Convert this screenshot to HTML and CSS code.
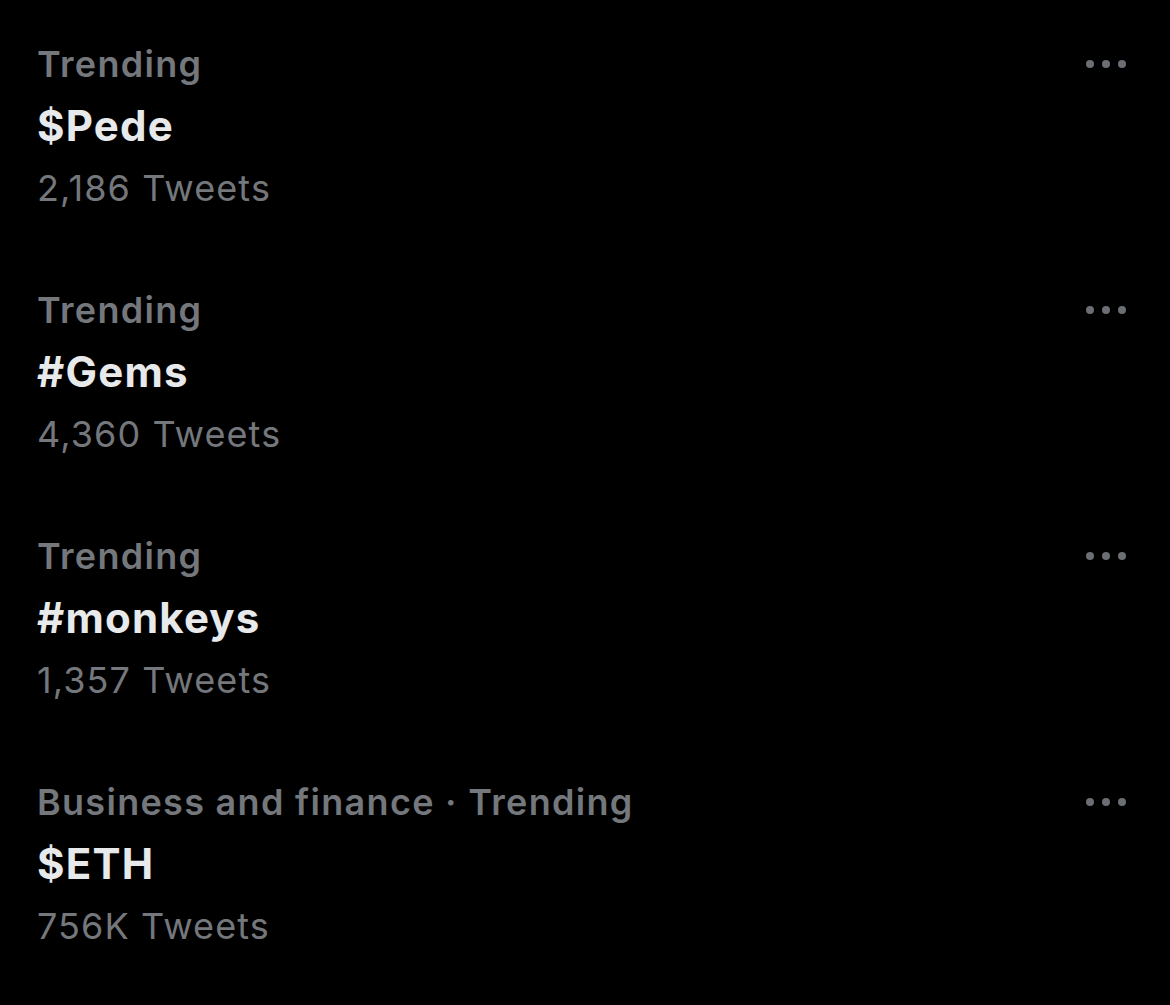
FILE: index.html
```html
<!DOCTYPE html>
<html>
<head>
<meta charset="utf-8">
<link rel="stylesheet" href="styles.css">
</head>
<body>
<div class="list">
  <div class="trend">
    <div class="info">
      <div class="cat">Trending</div>
      <div class="title">$Pede</div>
      <div class="count">2,186 Tweets</div>
    </div>
    <div class="more"><span></span><span></span><span></span></div>
  </div>
  <div class="trend">
    <div class="info">
      <div class="cat">Trending</div>
      <div class="title">#Gems</div>
      <div class="count">4,360 Tweets</div>
    </div>
    <div class="more"><span></span><span></span><span></span></div>
  </div>
  <div class="trend">
    <div class="info">
      <div class="cat">Trending</div>
      <div class="title">#monkeys</div>
      <div class="count">1,357 Tweets</div>
    </div>
    <div class="more"><span></span><span></span><span></span></div>
  </div>
  <div class="trend">
    <div class="info">
      <div class="cat">Business and finance · Trending</div>
      <div class="title">$ETH</div>
      <div class="count">756K Tweets</div>
    </div>
    <div class="more"><span></span><span></span><span></span></div>
  </div>
</div>
</body>
</html>
```
FILE: styles.css
```css
html, body {
  margin: 0;
  padding: 0;
  background: #000;
}
body {
  font-family: Inter, "Noto Sans", sans-serif;
  width: 1170px;
  height: 1005px;
  overflow: hidden;
}
.list {
  display: flex;
  flex-direction: column;
  gap: 60px;
  padding: 33px 0 0 37px;
}
.trend {
  display: flex;
  justify-content: space-between;
  align-items: flex-start;
}
.info {
  display: flex;
  flex-direction: column;
}
.cat {
  color: #74777b;
  font-size: 36px;
  font-weight: 600;
  line-height: 62px;
  letter-spacing: 1.3px;
}
.title {
  color: #e7e9ea;
  font-size: 42px;
  font-weight: 700;
  line-height: 62px;
  letter-spacing: 1.2px;
}
.count {
  color: #74777b;
  font-size: 36px;
  font-weight: 400;
  line-height: 62px;
  letter-spacing: 1.1px;
}
.more {
  display: flex;
  gap: 8px;
  margin-top: 27px;
  margin-right: 44px;
}
.more span {
  width: 8px;
  height: 8px;
  border-radius: 50%;
  background: #6b6f73;
}
```
